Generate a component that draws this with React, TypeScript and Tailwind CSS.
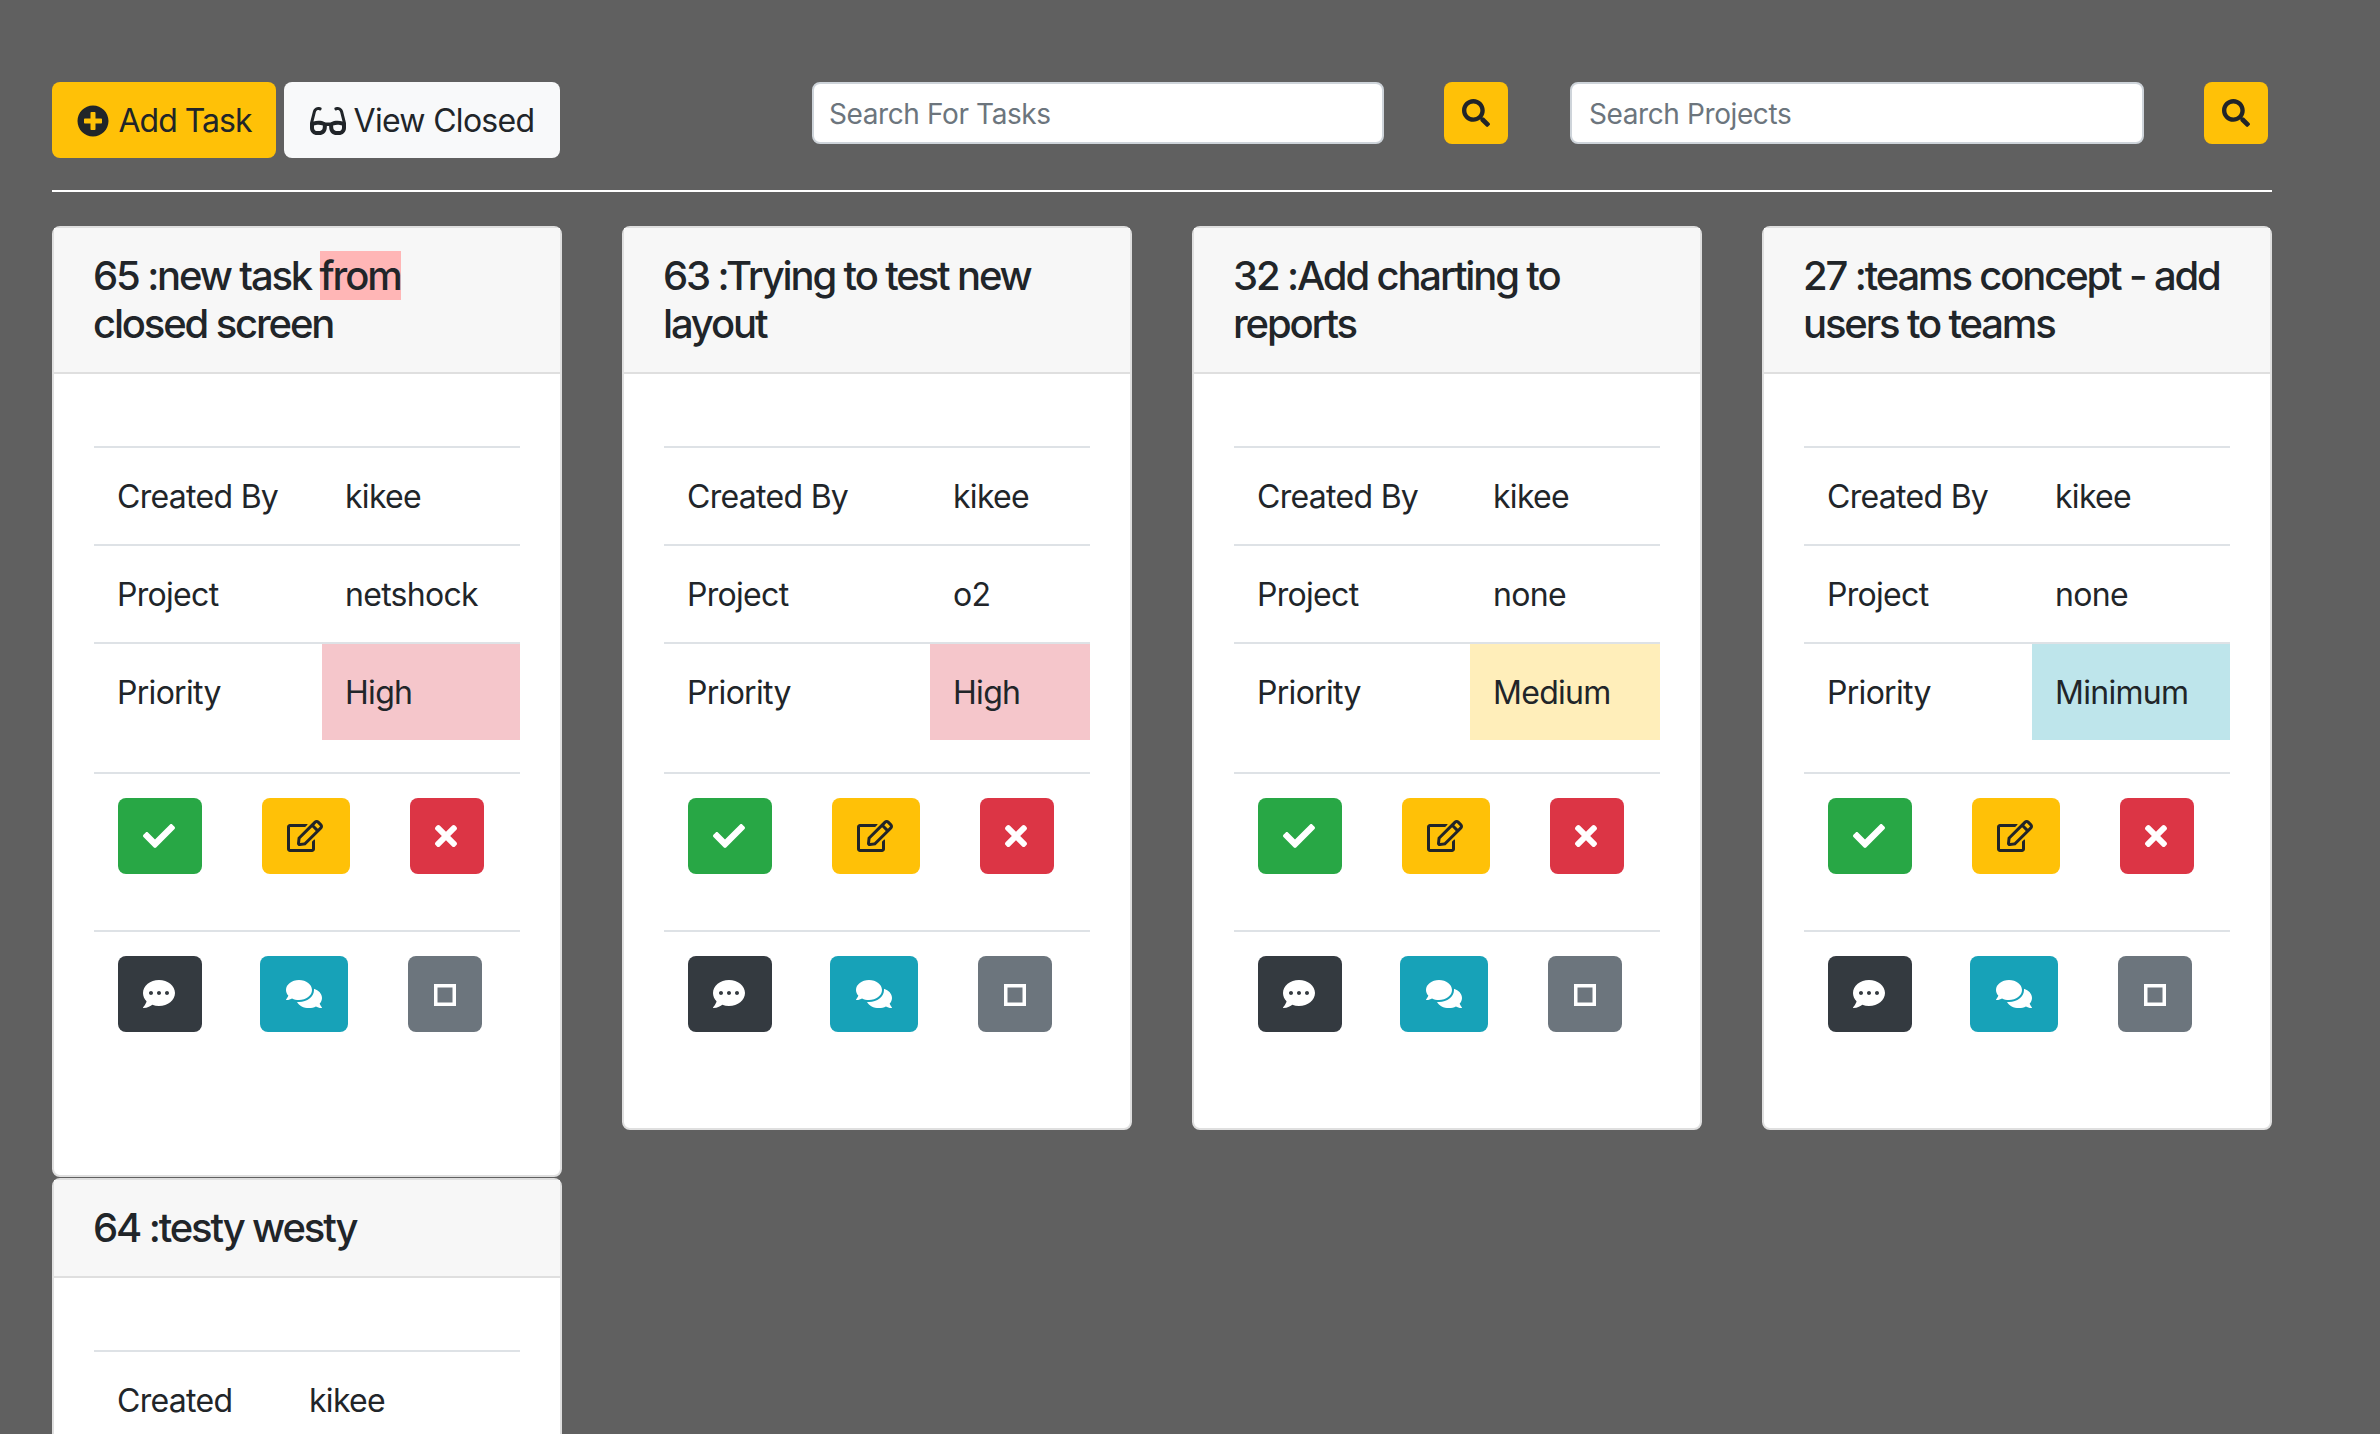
import { FaCheck, FaComments, FaCommentDots, FaGlasses, FaPlusCircle, FaRegEdit, FaSearch, FaTimes } from "react-icons/fa";

const font = { fontFamily: "Inter, 'Liberation Sans', sans-serif" };

type Task = {
  title: React.ReactNode;
  project: string;
  priority: string;
  priorityBg: string;
  labelCol: string;
  bottom: string;
};

const tasks: Task[] = [
  {
    title: (
      <>
        65 :new task <mark className="bg-[#ffb6b6] text-[#212529]">from</mark> closed screen
      </>
    ),
    project: "netshock",
    priority: "High",
    priorityBg: "bg-[#f5c6cb]",
    labelCol: "w-[228px]",
    bottom: "pb-[143px]",
  },
  {
    title: "63 :Trying to test new layout",
    project: "o2",
    priority: "High",
    priorityBg: "bg-[#f5c6cb]",
    labelCol: "w-[266px]",
    bottom: "pb-[96px]",
  },
  {
    title: "32 :Add charting to reports",
    project: "none",
    priority: "Medium",
    priorityBg: "bg-[#ffeeba]",
    labelCol: "w-[236px]",
    bottom: "pb-[96px]",
  },
  {
    title: "27 :teams concept - add users to teams",
    project: "none",
    priority: "Minimum",
    priorityBg: "bg-[#bee5eb]",
    labelCol: "w-[228px]",
    bottom: "pb-[96px]",
  },
];

const Row = ({ label, value, labelCol, valueBg }: { label: string; value: string; labelCol: string; valueBg?: string }) => (
  <div className="flex border-t-2 border-[#dee2e6]">
    <div className={`${labelCol} shrink-0 pt-[25px] pr-6 pb-[23px] pl-[23px]`}>{label}</div>
    <div className={`flex-1 pt-[25px] pr-6 pb-[23px] pl-[23px] ${valueBg ?? ""}`}>{value}</div>
  </div>
);

const IconBtn = ({ className, children }: { className: string; children: React.ReactNode }) => (
  <button className={`flex h-[76px] items-center justify-center rounded-lg ${className}`}>{children}</button>
);

const CardHeader = ({ children }: { children: React.ReactNode }) => (
  <div className="border-b-2 border-[#dfdfdf] bg-[#f7f7f7] py-6 pr-10 pl-[39px] text-[40px] leading-[48px] font-medium tracking-[-2.15px]">
    {children}
  </div>
);

const TaskCard = ({ task }: { task: Task }) => (
  <div className="w-[510px] rounded-lg border-2 border-[#dfdfdf] bg-white">
    <CardHeader>{task.title}</CardHeader>
    <div className={`px-10 pt-[72px] ${task.bottom}`}>
      <div>
        <Row label="Created By" value="kikee" labelCol={task.labelCol} />
        <Row label="Project" value={task.project} labelCol={task.labelCol} />
        <Row label="Priority" value={task.priority} labelCol={task.labelCol} valueBg={task.priorityBg} />
      </div>
      <div className="mt-8 grid grid-cols-[144px_148px_134px] border-t-2 border-[#dee2e6] pt-6 pl-6">
        <IconBtn className="w-[84px] bg-[#28a745] pr-[2px] text-white">
          <FaCheck size={32} />
        </IconBtn>
        <IconBtn className="w-[88px] bg-[#ffc107] pr-[2px] text-[#212529]">
          <FaRegEdit size={36} />
        </IconBtn>
        <IconBtn className="w-[74px] bg-[#dc3545] pr-[2px] text-white">
          <FaTimes size={32} />
        </IconBtn>
      </div>
      <div className="mt-14 grid grid-cols-[142px_148px_136px] border-t-2 border-[#dee2e6] pt-6 pl-6">
        <IconBtn className="w-[84px] bg-[#343a40] pr-[2px] text-white">
          <FaCommentDots size={32} />
        </IconBtn>
        <IconBtn className="w-[88px] bg-[#17a2b8] text-white">
          <FaComments size={36} />
        </IconBtn>
        <IconBtn className="w-[74px] bg-[#6c757d] pt-[2px] text-white">
          <svg width="22" height="22" viewBox="0 0 22 22" fill="none" stroke="currentColor" strokeWidth="3.5">
            <rect x="1.75" y="1.75" width="18.5" height="18.5" />
          </svg>
        </IconBtn>
      </div>
    </div>
  </div>
);

const SearchBtn = ({ className }: { className: string }) => (
  <button className={`flex h-[62px] w-16 items-center justify-center rounded-lg bg-[#ffc107] text-[#212529] ${className}`}>
    <FaSearch size={28} />
  </button>
);

const SearchInput = ({ placeholder, className }: { placeholder: string; className: string }) => (
  <input
    placeholder={placeholder}
    className={`h-[62px] rounded-lg border-2 border-[#ced4da] bg-white pt-[2px] pr-4 text-[28px] tracking-[-0.4px] text-[#495057] placeholder:text-[#6c757d] ${className}`}
  />
);

export default function App() {
  return (
    <div
      className="h-[1434px] overflow-hidden bg-[#606060] pt-[82px] pl-[52px] text-[32px] leading-[48px] tracking-[-0.7px] text-[#212529]"
      style={font}
    >
      <div className="w-[2220px]">
        <div className="flex items-start">
          <button className="flex h-[76px] w-[224px] items-center justify-center gap-[10px] rounded-lg bg-[#ffc107] pt-[2px] tracking-[-1px]">
            <FaPlusCircle size={32} />
            Add Task
          </button>
          <button className="ml-2 flex h-[76px] w-[276px] items-center justify-center gap-[8px] rounded-lg bg-[#f8f9fa] pt-[2px]">
            <FaGlasses size={36} />
            View Closed
          </button>
          <SearchInput placeholder="Search For Tasks" className="ml-[252px] w-[572px] pl-[15px]" />
          <SearchBtn className="ml-[60px]" />
          <SearchInput placeholder="Search Projects" className="ml-[62px] w-[574px] pl-[17px]" />
          <SearchBtn className="ml-[60px]" />
        </div>
        <hr className="mt-8 mb-[34px] border-t-2 border-white" />
        <div className="flex flex-wrap items-start gap-x-[60px] gap-y-[1px]">
          {tasks.map((t, i) => (
            <TaskCard key={i} task={t} />
          ))}
          <div className="w-[510px] rounded-lg border-2 border-[#dfdfdf] bg-white">
            <CardHeader>64 :testy westy</CardHeader>
            <div className="px-10 pt-[72px]">
              <Row label="Created By" value="kikee" labelCol="w-[192px]" />
            </div>
          </div>
        </div>
      </div>
    </div>
  );
}
